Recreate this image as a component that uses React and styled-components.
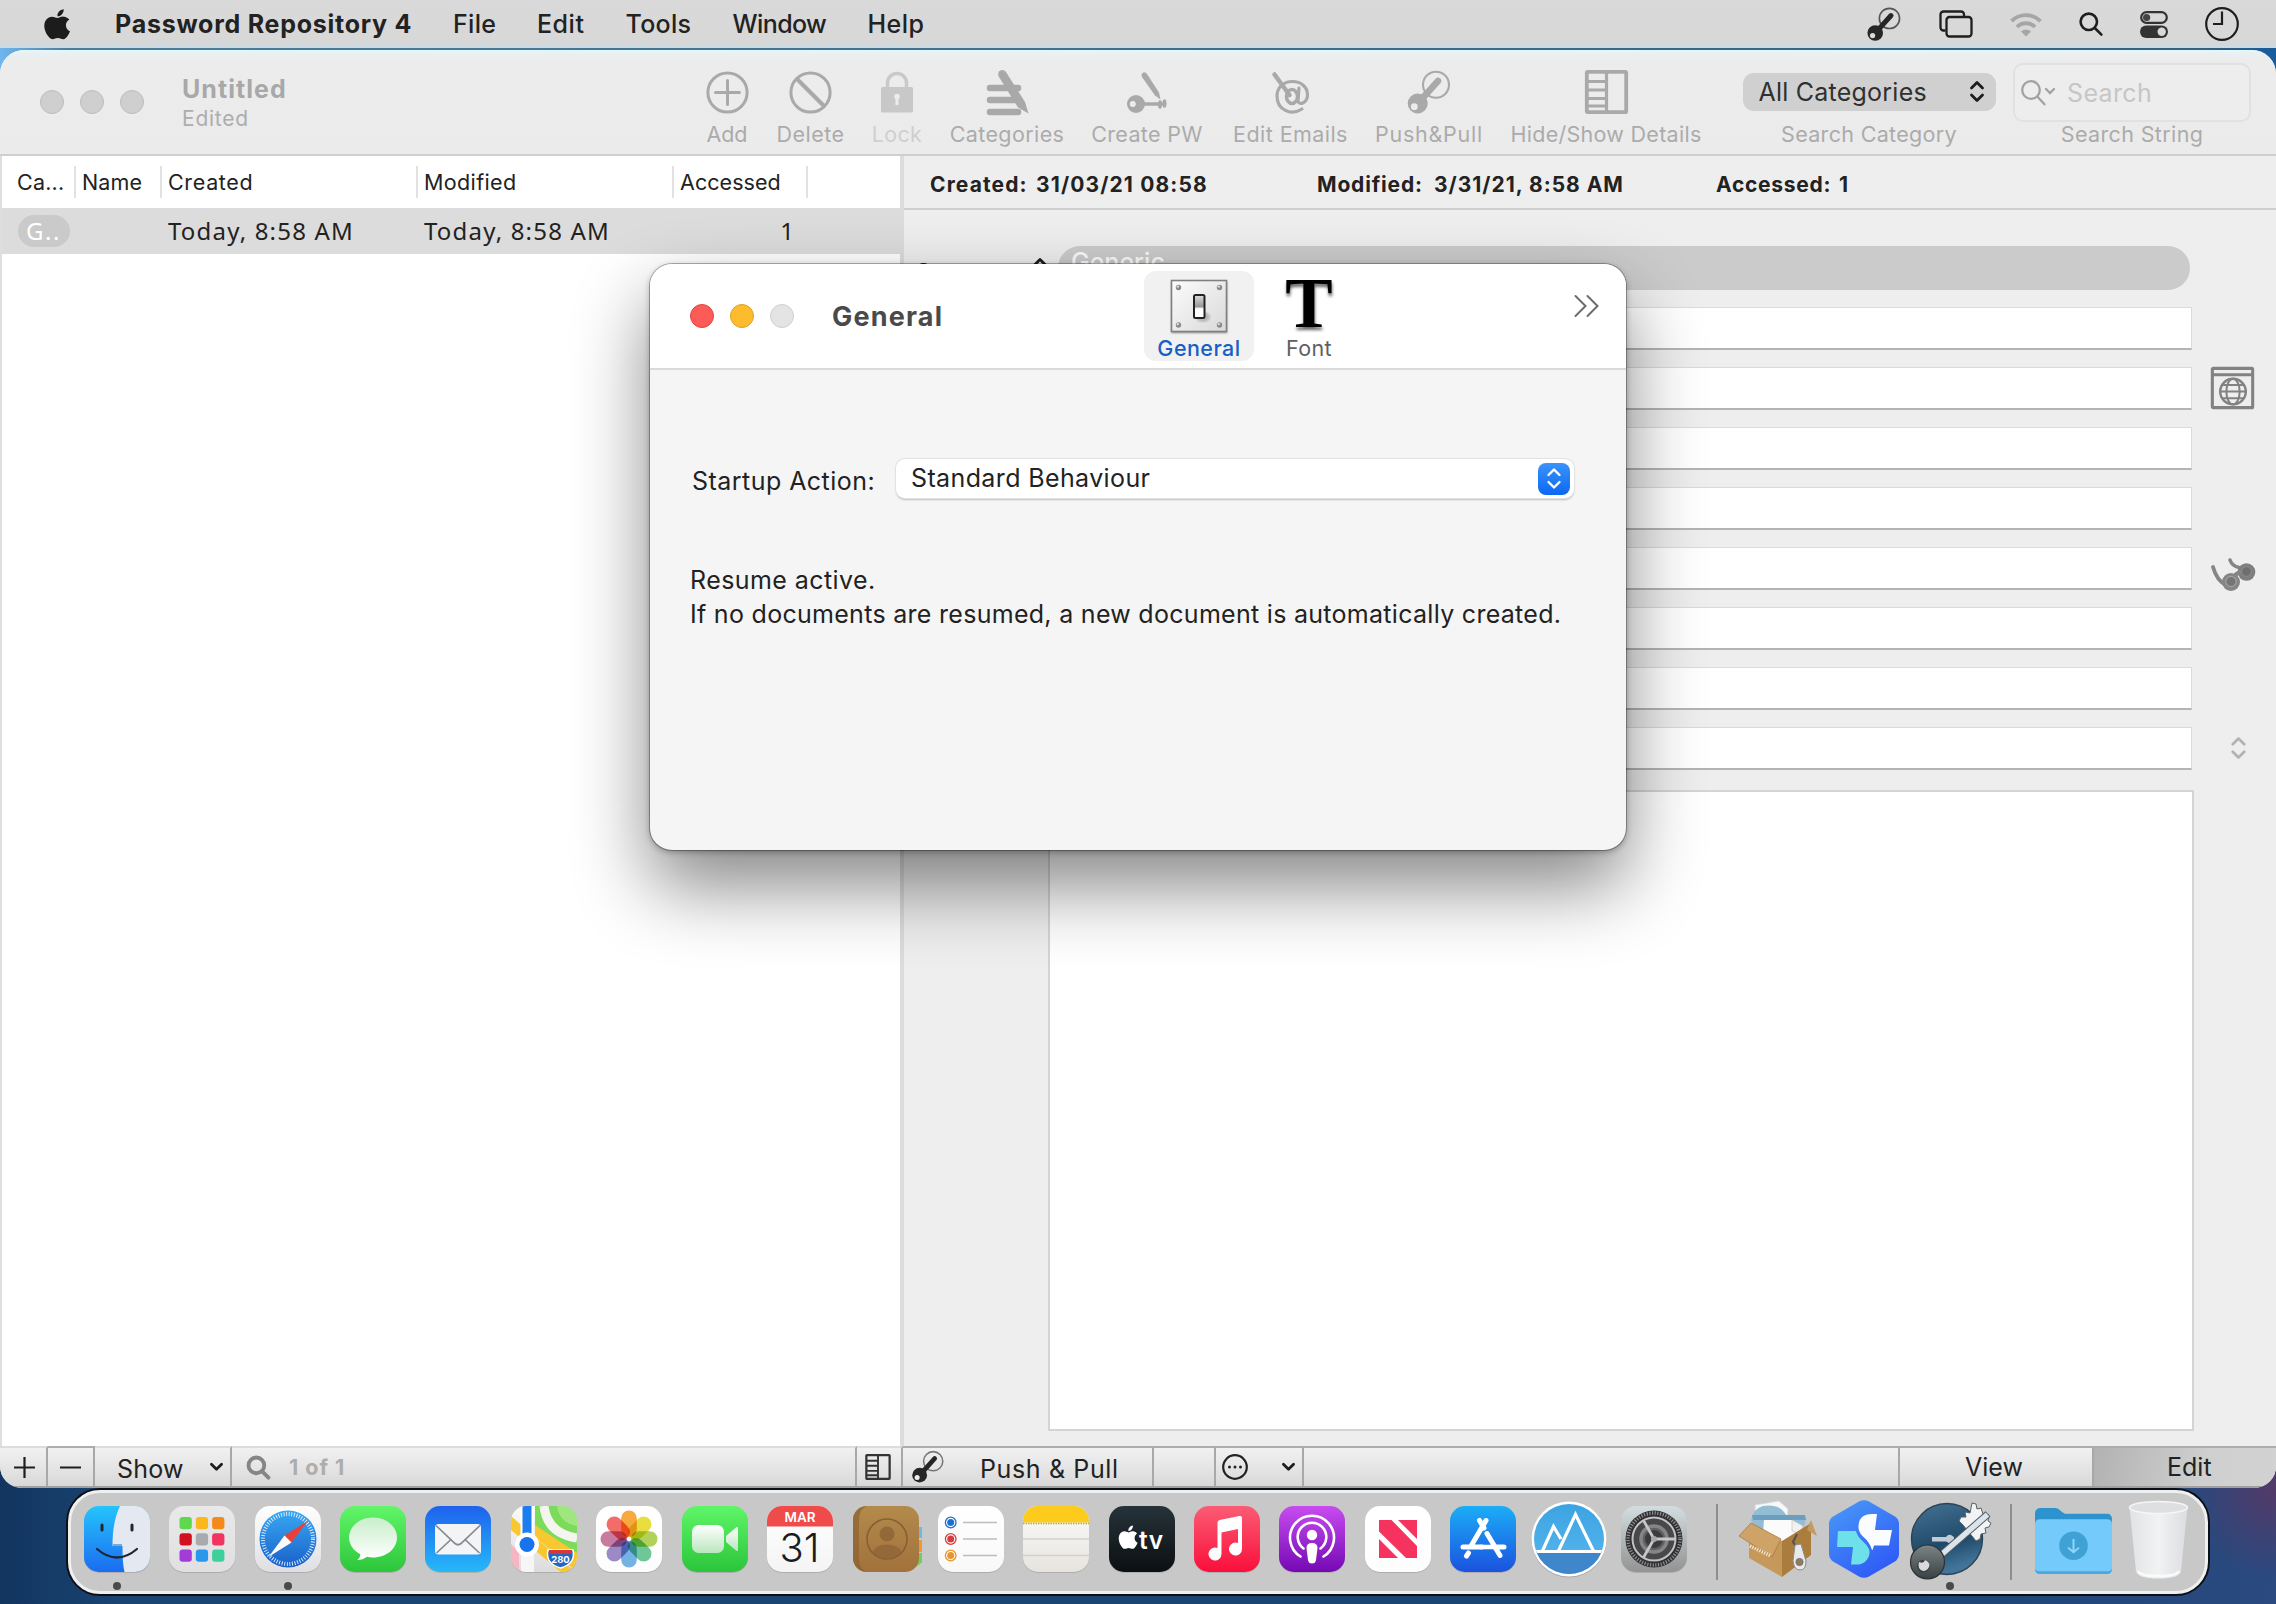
import React from "react";
import styled, { createGlobalStyle } from "styled-components";

const Global = createGlobalStyle`
  * { box-sizing: border-box; }
  body { margin: 0; overflow: hidden; }
  svg { display: block; flex: none; overflow: visible; }
`;

/* ---------- Primitives ---------- */

const Text = styled.span`
  font-family: ${(p) => p.$family || "Inter"}, "Liberation Sans", sans-serif;
  font-size: ${(p) => p.$size || 25}px;
  font-weight: ${(p) => p.$weight || 400};
  letter-spacing: ${(p) => p.$ls || 0}px;
  color: ${(p) => p.$color || "#222"};
  line-height: 30px;
  white-space: pre;
`;

const Desktop = styled.div`
  position: relative;
  width: 2276px;
  height: 1604px;
  overflow: hidden;
  display: flex;
  flex-direction: column;
  background:
    radial-gradient(circle at 2276px 1490px, #533a68 0, rgba(83, 58, 104, 0) 90px),
    linear-gradient(90deg, #12355f 0, rgba(24, 68, 112, 0) 120px) 0 1440px / 100% 164px no-repeat,
    linear-gradient(90deg, #1a4472 0, #1a4472 80%, #2a4a80 100%) 0 1440px / 100% 164px no-repeat,
    linear-gradient(90deg, #6fb6ee 0, #4a7d9c 3%, #33617f 97%, #175c9e 100%);
`;

/* ---------- Menu bar ---------- */

const MenuBar = styled.header`
  height: 48px;
  flex: none;
  display: grid;
  grid-template-columns: 71px 338px 84px 88.5px 107px 135px 1fr auto;
  align-items: center;
  padding: 0 37px 0 44px;
  background: linear-gradient(#d9d9d9 0, #d8d8d8 40px, #d9d6d4 43px, #cddae1 45px);
`;

const StatusItems = styled.div`
  display: flex;
  align-items: center;
  & > svg + svg { margin-left: 37px; }
`;

/* ---------- Main window ---------- */

const Window = styled.main`
  height: 1438px;
  margin-top: 2px;
  flex: none;
  display: flex;
  flex-direction: column;
  border-radius: 24px 24px 22px 22px;
  overflow: hidden;
  background: #ededed;
`;

const Toolbar = styled.div`
  height: 106px;
  flex: none;
  display: flex;
  align-items: flex-start;
  background: linear-gradient(#e4f7fd 0, #e9f1f3 3px, #ececec 9px, #ebebeb 100%);
  border-bottom: 2px solid #cfcfcf;
`;

const Lights = styled.div`
  display: flex;
  gap: 16px;
  padding: 40px 0 0 40px;
`;

const Light = styled.i`
  width: 24px;
  height: 24px;
  border-radius: 50%;
  background: ${(p) => p.$c};
  border: 1px solid ${(p) => p.$b};
`;

const TitleBlock = styled.div`
  width: 561px;
  padding: 24px 0 0 38px;
  display: flex;
  flex-direction: column;
`;

const Tools = styled.div`
  display: flex;
  gap: 25px;
`;

const Tool = styled.div`
  width: ${(p) => p.$w}px;
  margin-left: ${(p) => p.$ml || 0}px;
  height: 104px;
  display: flex;
  flex-direction: column;
  align-items: center;
  padding-top: 12px;
`;

const ToolArt = styled.div`
  height: 60px;
  flex: none;
  display: flex;
  align-items: center;
  align-self: stretch;
  justify-content: center;
  margin-bottom: -3px;
`;

const CategorySelect = styled.div`
  width: 253px;
  height: 38px;
  border-radius: 11px;
  background: #d0d0d0;
  display: flex;
  align-items: center;
  justify-content: space-between;
  padding: 0 12px 1px 16px;
`;

const SearchBox = styled.div`
  width: 238px;
  height: 59px;
  border-radius: 10px;
  border: 2px solid #e3e1e0;
  background: #ededed;
  display: flex;
  align-items: center;
  gap: 12px;
  padding: 2px 0 0 6px;
`;

const Panes = styled.div`
  flex: 1;
  min-height: 0;
  display: grid;
  grid-template-columns: 904px 1fr;
`;

const ListPane = styled.section`
  background: #fff;
  border-left: 2px solid #dedede;
  border-right: 4px solid #dcdcdc;
`;

const listColumns = "74px 86px 256px 256px 134px 1fr";

const ListHeader = styled.div`
  height: 52px;
  display: grid;
  grid-template-columns: ${listColumns};
  align-items: center;
`;

const HeadCell = styled.div`
  height: 32px;
  display: flex;
  align-items: center;
  padding-left: ${(p) => p.$pl || 5}px;
  border-right: 2px solid #e2e2e2;
`;

const ListRow = styled.div`
  height: 46px;
  display: grid;
  grid-template-columns: ${listColumns};
  align-items: center;
  background: #dcdcdc;
`;

const Cell = styled.div`
  padding-left: 6px;
  display: flex;
  justify-content: ${(p) => (p.$right ? "flex-end" : "flex-start")};
  padding-right: ${(p) => (p.$right ? 14 : 0)}px;
`;

const CategoryPill = styled.div`
  width: 52px;
  height: 32px;
  margin-left: 16px;
  border-radius: 16px;
  background: #cacaca;
  display: flex;
  align-items: center;
  padding-left: 8px;
`;

const DetailPane = styled.section`
  display: flex;
  flex-direction: column;
  background: #eeeeee;
`;

const InfoBar = styled.div`
  height: 54px;
  display: grid;
  grid-template-columns: 106px 281px 117px 282px 123px 1fr;
  align-items: center;
  padding: 5px 0 0 26px;
  border-bottom: 2px solid #cfcfcf;
`;

const Form = styled.div`
  padding: 36px 0 0 10px;
  display: flex;
  flex-direction: column;
`;

const FormRow = styled.div`
  display: grid;
  grid-template-columns: 135px 1143px 1fr;
  align-items: center;
  height: ${(p) => p.$h || 60}px;
`;

const GenericPill = styled.div`
  height: 44px;
  margin: 0 2px 0 9px;
  border-radius: 22px;
  background: #cbcbcb;
  display: flex;
  align-items: center;
  padding: 0 0 12px 13px;
`;

const LabelCell = styled.div`
  display: flex;
  align-items: center;
  justify-content: space-between;
  padding-right: 2px;
`;

const RowLabel = styled.div`
  padding-top: 9px;
`;

const Field = styled.div`
  height: 43px;
  background: #fff;
  border: 1px solid #dadada;
  border-bottom: 2px solid #b4b4b4;
`;

const RowIcon = styled.div`
  padding-left: ${(p) => p.$pl}px;
  padding-top: ${(p) => p.$pt || 0}px;
`;

const Notes = styled.div`
  width: 1146px;
  height: 641px;
  margin: 12px 0 0 134px;
  background: #fff;
  border: 2px solid #d4d4d4;
`;

const BottomBar = styled.footer`
  height: 42px;
  flex: none;
  display: flex;
  background: linear-gradient(#f2f2f2 0, #e6e6e6 50%, #d8d8d8 100%);
  border-bottom: 2px solid #a0a0a0;
`;

const Segment = styled.div`
  width: ${(p) => p.$w}px;
  flex: ${(p) => (p.$grow ? "1" : "none")};
  display: flex;
  align-items: center;
  padding-left: ${(p) => p.$pl || 0}px;
  gap: ${(p) => p.$gap || 0}px;
  background: ${(p) => p.$bg || "none"};
  border-right: ${(p) => (p.$last ? 0 : 2)}px solid #a8a8a8;
  border-top: 2px solid ${(p) => p.$top || "#adadad"};
`;

const Lowered = styled.div`
  display: flex;
  padding-top: 3px;
`;

/* ---------- Preferences window ---------- */

const Prefs = styled.section`
  position: absolute;
  left: 650px;
  top: 264px;
  width: 976px;
  height: 586px;
  border-radius: 22px;
  background: #f5f5f5;
  box-shadow: 0 0 0 1px rgba(0, 0, 0, 0.28), 0 2px 6px rgba(0, 0, 0, 0.3), 0 36px 76px rgba(0, 0, 0, 0.48);
  display: flex;
  flex-direction: column;
  overflow: clip;
`;

const PrefsBar = styled.div`
  height: 106px;
  flex: none;
  display: flex;
  background: #fff;
  border-bottom: 2px solid #dadada;
`;

const PrefsTitle = styled.div`
  width: 350px;
  padding: 38px 0 0 38px;
`;

const Tab = styled.div`
  width: 110px;
  height: 90px;
  margin-top: 7px;
  border-radius: 12px;
  background: ${(p) => (p.$active ? "#f1f1f1" : "none")};
  display: flex;
  flex-direction: column;
  align-items: center;
  padding-top: 8px;
`;

const TabArt = styled.div`
  height: 56px;
`;

const More = styled.div`
  margin: 31px 27px 0 auto;
`;

const PrefsBody = styled.div`
  display: flex;
  flex-direction: column;
  padding: 89px 52px 0 40px;
`;

const StartupRow = styled.div`
  display: grid;
  grid-template-columns: 204px 1fr;
  align-items: center;
  padding-left: 2px;
`;

const StartupLabel = styled.div`
  padding-top: 4px;
`;

const Popup = styled.div`
  height: 39px;
  border-radius: 9px;
  background: #fff;
  box-shadow: 0 0 0 1px #e2e2e2, 0 2px 2px rgba(0, 0, 0, 0.22);
  display: flex;
  align-items: center;
  justify-content: space-between;
  padding: 0 4px 0 15px;
`;

const PopupValue = styled.div`
  display: flex;
  padding-bottom: 2px;
`;

const Stepper = styled.div`
  width: 32px;
  height: 32px;
  border-radius: 8px;
  background: linear-gradient(#3c93fb, #0a68f2);
  display: flex;
  align-items: center;
  justify-content: center;
`;

const Explain = styled.p`
  margin: 67px 0 0;
  display: flex;
  flex-direction: column;
  gap: 4px;
`;

/* ---------- Dock ---------- */

const Dock = styled.nav`
  flex: none;
  width: 2140px;
  height: 104px;
  margin: 2px 0 0 68px;
  border-radius: 32px;
  border: 3px solid #eef0ef;
  box-shadow: 0 0 0 2px #0c1016;
  background: #c8c8c8;
  display: flex;
  z-index: 1;
  padding-left: 3px;
`;

const Slot = styled.div`
  width: ${(p) => p.$w || 85.5}px;
  height: 98px;
  display: flex;
  flex-direction: column;
  align-items: center;
  justify-content: flex-start;
  padding-top: ${(p) => p.$pt ?? 13}px;
`;

const RunDot = styled.i`
  width: 8px;
  height: 8px;
  border-radius: 50%;
  background: #4a4a4a;
  margin-top: ${(p) => p.$mt ?? 10}px;
`;

const Divider = styled.div`
  width: 2px;
  height: 76px;
  margin: 11px ${(p) => p.$mr}px 0 ${(p) => p.$ml}px;
  background: #8e8e8e;
`;

/* ---------- Symbols ---------- */

const AppleShape = ({ fill }) => (
  <>
    <path fill={fill} d="M21.6 16.2c0-3.2 2.6-4.7 2.7-4.8-1.5-2.200-3.800-2.500-4.600-2.500-2-.2-3.800 1.200-4.800 1.200-1 0-2.500-1.100-4.100-1.100-2.100 0-4.100 1.200-5.200 3.100-2.200 3.800-.6 9.500 1.600 12.600 1 1.500 2.300 3.200 3.900 3.100 1.600-.1 2.200-1 4.100-1s2.500 1 4.100 1c1.700 0 2.800-1.500 3.800-3.100 1.200-1.700 1.700-3.400 1.700-3.500-.1 0-3.200-1.300-3.200-5z" />
    <path fill={fill} d="M18.500 6.800c.9-1.100 1.500-2.500 1.300-4-1.200.1-2.700.8-3.600 1.900-.8.900-1.500 2.400-1.300 3.900 1.400.1 2.800-.7 3.600-1.800z" />
  </>
);

const Apple = () => (
  <svg width="26" height="31" viewBox="4.300 2.500 20.500 26" preserveAspectRatio="none"><AppleShape fill="#1c1c1c" /></svg>
);

const PushKey = ({ color, hole, w = 46, h = 45, ring = color }) => (
  <svg width={w} height={h} viewBox="0 0 46 45">
    <circle cx="30" cy="14.700" r="13" fill="none" stroke={ring} strokeWidth="2.100" />
    <path d="M14 31L32 11" stroke={color} strokeWidth="6.500" strokeLinecap="round" />
    <circle cx="11.700" cy="33.500" r="10" fill={color} />
    <circle cx="8.300" cy="36.700" r="3.400" fill={hole} />
  </svg>
);

const Windows = () => (
  <svg width="34" height="28" viewBox="0 0 34 28" fill="none" stroke="#1e1e1e" strokeWidth="2.300">
    <path d="M6.500 20.500H4.500a3 3 0 0 1-3-3V4.500a3 3 0 0 1 3-3H22a3 3 0 0 1 3 3v2" />
    <rect x="7.500" y="7" width="25" height="19.500" rx="3" />
  </svg>
);

const Wifi = () => (
  <svg width="32" height="25" viewBox="0 0 32 25" fill="none" stroke="#a6a6a6" strokeWidth="3.800">
    <path d="M1.500 9.200a20.500 20.500 0 0 1 29 0" />
    <path d="M7 15a12.700 12.700 0 0 1 18 0" />
    <path d="M16 24.500l-5-5a7 7 0 0 1 10 0z" fill="#a6a6a6" stroke="none" />
  </svg>
);

const Magnifier = ({ size = 24, color = "#1e1e1e", sw = 2.600 }) => (
  <svg width={size} height={size} viewBox="0 0 24 24" fill="none" stroke={color} strokeWidth={sw} strokeLinecap="round">
    <circle cx="9.800" cy="9.800" r="8.200" />
    <path d="M15.800 16l6.600 6.600" />
  </svg>
);

const ControlCenter = () => (
  <svg width="28" height="27" viewBox="0 0 28 27">
    <rect x="1.200" y="1.200" width="25.600" height="10.600" rx="5.300" fill="none" stroke="#333" strokeWidth="2.200" />
    <circle cx="6.600" cy="6.500" r="3.600" fill="#444" />
    <rect x="0" y="14.500" width="28" height="12.500" rx="6.200" fill="#333" />
    <circle cx="21.700" cy="20.700" r="4.200" fill="#d9d9d9" />
  </svg>
);

const Clock = () => (
  <svg width="34" height="34" viewBox="0 0 34 34" fill="none" stroke="#1e1e1e" strokeWidth="2.200">
    <circle cx="17" cy="17" r="15.800" />
    <path d="M17 4.500V17H8" />
  </svg>
);

const G = "#a9a9a9";

const AddIcon = () => (
  <svg width="43" height="43" viewBox="0 0 43 43" fill="none" stroke={G} strokeWidth="3">
    <circle cx="21.500" cy="21.500" r="19.600" />
    <path d="M21.500 9.500v24M9.500 21.500h24" strokeLinecap="round" />
  </svg>
);

const DeleteIcon = () => (
  <svg width="43" height="43" viewBox="0 0 43 43" fill="none" stroke={G} strokeWidth="3">
    <circle cx="21.500" cy="21.500" r="19.600" />
    <path d="M8 8l27 27" strokeWidth="4" />
  </svg>
);

const LockIcon = () => (
  <svg width="32" height="41" viewBox="0 0 32 41">
    <path d="M6.500 16V11a9.500 9.500 0 0 1 19 0v5" fill="none" stroke="#c9c9c9" strokeWidth="3.500" />
    <rect y="15" width="32" height="25.500" rx="1.500" fill="#c8c8c8" />
    <circle cx="16" cy="24.500" r="2.800" fill="#ececec" />
    <path d="M16 25v8" stroke="#ececec" strokeWidth="3" />
  </svg>
);

const CategoriesIcon = () => (
  <svg width="43" height="45" viewBox="0 0 43 45" stroke={G} strokeWidth="6.500" strokeLinecap="round">
    <path d="M4 18h28M4 30h28M4 42h28" />
    <path d="M13 1.500q4-3 7 0.500L39 32l3.500 11.500L32 37.500 13 7q-1.500-3 0-5.500z" fill={G} stroke="none" />
  </svg>
);

const CreateIcon = () => (
  <svg width="40" height="43" viewBox="0 0 40 43">
    <circle cx="9" cy="33" r="9" fill={G} />
    <circle cx="5.800" cy="33" r="3" fill="#ececec" />
    <path d="M16 33h22M33 31v5M37.500 30v5" stroke={G} strokeWidth="3.600" strokeLinecap="round" />
    <path d="M15 2.500q3-2.500 5 .5l12 18.500 1.500 7-5.500-4L15 6q-1-2 0-3.500z" fill={G} />
  </svg>
);

const EmailIcon = () => (
  <svg width="38" height="43" viewBox="0 0 38 43" fill="none" stroke={G} strokeWidth="3.200" strokeLinecap="round">
    <path d="M2.500 3.500l15 20.500" strokeWidth="4.500" />
    <path d="M30 38c-11 7-25 1-25-13C5 16 12 10.500 20.500 10.500 29 10.500 35.500 16 35.500 23.500c0 9-9.500 11.500-9.500 6L27 17" />
    <ellipse cx="20" cy="25.500" rx="5.500" ry="7" strokeWidth="3.500" />
  </svg>
);

const SidebarIcon = ({ w, h, color }) => (
  <svg width={w} height={h} viewBox="0 0 43 44" fill="none" stroke={color} strokeWidth="3.800">
    <rect x="1.800" y="1.800" width="39.400" height="40.400" rx="1" />
    <path d="M21.500 2v40M3 11.500h18M3 20h18M3 28.500h18M3 36h18" strokeWidth="3.200" />
  </svg>
);

const UpDown = ({ w = 14, h = 21, color = "#1c1c1c", sw = 2.800 }) => (
  <svg width={w} height={h} viewBox="0 0 14 21" fill="none" stroke={color} strokeWidth={sw} strokeLinecap="round" strokeLinejoin="round">
    <path d="M1.500 7L7 1.500 12.500 7M1.500 14L7 19.500 12.500 14" />
  </svg>
);

const Chevron = ({ w = 13, color = "#1c1c1c", sw = 2.800 }) => (
  <svg width={w} height={w * 0.6} viewBox="0 0 13 8" fill="none" stroke={color} strokeWidth={sw} strokeLinecap="round" strokeLinejoin="round">
    <path d="M1.300 1.300L6.500 6.500 11.700 1.300" />
  </svg>
);

const SearchMenu = () => (
  <svg width="34" height="26" viewBox="0 0 34 26" fill="none" stroke="#a2a2a2" strokeWidth="2.300" strokeLinecap="round">
    <circle cx="10" cy="10" r="8.800" />
    <path d="M16.500 16.800l7 7.500M25 9l4 4 4-4" />
  </svg>
);

const WebIcon = () => (
  <svg width="43" height="42" viewBox="0 0 42 41" fill="none" stroke="#828282" strokeWidth="3">
    <rect x="1.300" y="1.300" width="39.400" height="38.400" rx="1" />
    <path d="M1 7.500h40" />
    <g strokeWidth="2.400">
      <circle cx="21.500" cy="24" r="12.500" />
      <ellipse cx="21.500" cy="24" rx="6.500" ry="12.500" strokeWidth="2" />
      <path d="M9 24h25M11.500 17.500h20M11.500 30.500h20" strokeWidth="1.900" />
    </g>
  </svg>
);

const GlassesIcon = () => (
  <svg width="44" height="33" viewBox="0 0 44 33">
    <path d="M2 9q4 14 13 18" fill="none" stroke="#858585" strokeWidth="3.800" strokeLinecap="round" />
    <path d="M19 2q2 6 9 7.500" fill="none" stroke="#858585" strokeWidth="3.500" strokeLinecap="round" />
    <circle cx="35.500" cy="14" r="8.800" fill="#7e7e7e" />
    <path d="M24 17l6-4" stroke="#858585" strokeWidth="4" />
    <circle cx="20" cy="24" r="9" fill="#858585" />
    <circle cx="20" cy="23.500" r="5.200" fill="#757575" stroke="#a2a2a2" strokeWidth="1.200" />
    <circle cx="35.500" cy="13.500" r="4.800" fill="#6e6e6e" stroke="#8c8c8c" />
  </svg>
);

const PlusMinus = ({ plus }) => (
  <svg width="21" height="21" viewBox="0 0 21 21" stroke="#1e1e1e" strokeWidth="2.200">
    <path d={plus ? "M0 10.500h21M10.500 0v21" : "M0 10.500h21"} />
  </svg>
);

const Ellipsis = () => (
  <svg width="26" height="26" viewBox="0 0 26 26">
    <circle cx="13" cy="13" r="11.800" fill="none" stroke="#222" strokeWidth="2.200" />
    {[7.500, 13, 18.500].map((x) => <circle key={x} cx={x} cy="13" r="1.500" fill="#222" />)}
  </svg>
);

const SwitchPlate = () => (
  <svg width="58" height="54" viewBox="0 0 58 54">
    <defs>
      <linearGradient id="plate" x1="0" y1="0" x2="1" y2="1"><stop offset="0" stopColor="#fcfcfc" /><stop offset="1" stopColor="#d9d9d9" /></linearGradient>
      <linearGradient id="toggle" x1="0" y1="0" x2="0" y2="1"><stop offset="0" stopColor="#ddd" /><stop offset=".5" stopColor="#999" /><stop offset=".6" stopColor="#fff" /><stop offset="1" stopColor="#fff" /></linearGradient>
      <filter id="soft"><feGaussianBlur stdDeviation="1.300" /></filter>
    </defs>
    <rect x="1.500" y="3" width="55.500" height="51" fill="#888" filter="url(#soft)" />
    <rect x="1.500" y="1.500" width="55" height="51" fill="url(#plate)" stroke="#808080" strokeWidth="1.600" />
    {[[8.500, 8.500], [49.500, 8.500], [8.500, 46], [49.500, 46]].map(([x, y]) => (
      <g key={`${x}-${y}`}>
        <circle cx={x} cy={y} r="2.700" fill="#8b8b8b" />
        <circle cx={x - 0.700} cy={y - 0.900} r="1.200" fill="#ddd" />
      </g>
    ))}
    <ellipse cx="33" cy="38" rx="7" ry="5" fill="#999" opacity=".6" filter="url(#soft)" />
    <rect x="24" y="16" width="10.500" height="23" rx="1.500" fill="url(#toggle)" stroke="#222" strokeWidth="2" />
  </svg>
);

const LetterT = () => (
  <svg width="58" height="54" viewBox="0 0 58 54">
    <defs><filter id="drop" x="-20%" y="-20%" width="140%" height="150%"><feDropShadow dx="0.500" dy="3" stdDeviation="1.700" floodColor="#000" floodOpacity=".6" /></filter></defs>
    <text x="29" y="48" textAnchor="middle" fontFamily="Liberation Serif, serif" fontWeight="700" fontSize="71" fill="#050505" filter="url(#drop)">T</text>
  </svg>
);

const DoubleChevron = () => (
  <svg width="25" height="22" viewBox="0 0 25 22" fill="none" stroke="#6c6c6c" strokeWidth="2" strokeLinecap="round">
    <path d="M1.500 1l10 10-10 10M13.500 1l10 10-10 10" />
  </svg>
);

/* ---------- Dock icons ---------- */

const Tile = ({ id, from, to, children }) => (
  <svg width="66" height="66" viewBox="0 0 66 66">
    <defs>
      <linearGradient id={`g-${id}`} x1="0" y1="0" x2="0" y2="1"><stop offset="0" stopColor={from} /><stop offset="1" stopColor={to} /></linearGradient>
      <clipPath id={`c-${id}`}><rect width="66" height="66" rx="15" /></clipPath>
    </defs>
    <rect y="1" width="66" height="66" rx="15" fill="#000" opacity=".13" />
    <g clipPath={`url(#c-${id})`}>
      <rect width="66" height="66" fill={`url(#g-${id})`} />
      {children}
    </g>
  </svg>
);

const Finder = () => (
  <Tile id="finder" from="#25c4fb" to="#1b6cf1">
    <path d="M36 0h30v66H40.500c-1.500-7-2-15-2-26H28.500c0-16 2-28 7.500-40z" fill="#e4e8f1" />
    <path d="M29 39h9" stroke="#1a66b8" strokeWidth="1.200" />
    <path d="M18 19v5M48 19v5" stroke="#1b2733" strokeWidth="3" strokeLinecap="round" />
    <path d="M13 43q20 17 40 0" fill="none" stroke="#1b2733" strokeWidth="2.200" strokeLinecap="round" />
  </Tile>
);

const padColors = ["#5fd84f", "#fbb81c", "#f58a1c", "#d3101f", "#a7abb0", "#f2345e", "#a33bd6", "#2798ee", "#3fcf9b"];
const Launchpad = () => (
  <Tile id="pad" from="#e9e9ea" to="#e0e0e2">
    {padColors.map((c, i) => (
      <rect key={c} x={10.500 + (i % 3) * 16.300} y={11 + Math.floor(i / 3) * 16.200} width="12.300" height="12.300" rx="3" fill={c} />
    ))}
  </Tile>
);

const Safari = () => (
  <Tile id="safari" from="#ffffff" to="#dfdfe3">
    <defs><linearGradient id="sea" x1="0" y1="0" x2="0" y2="1"><stop offset="0" stopColor="#38a9f2" /><stop offset="1" stopColor="#1a5fc9" /></linearGradient></defs>
    <circle cx="33" cy="33" r="28.500" fill="url(#sea)" />
    <circle cx="33" cy="33" r="25" fill="none" stroke="#e5f2ff" strokeWidth="4" strokeDasharray=".9 1.718" />
    <path d="M52.500 15L36.500 36.500 29.500 29.500z" fill="#e8413b" />
    <path d="M13.500 51L29.500 29.500 36.500 36.500z" fill="#fafafa" />
  </Tile>
);

const Messages = () => (
  <Tile id="msg" from="#62f569" to="#2cc63b">
    <defs><linearGradient id="bub" x1="0" y1="0" x2="0" y2="1"><stop offset="0" stopColor="#c9eecb" /><stop offset="1" stopColor="#fff" /></linearGradient></defs>
    <path d="M33 11.500c13.500 0 24 9 24 20s-10.500 20-24 20c-2 0-4.200-.2-6-.7-2.500 2-6 3.200-10 3.400 2-1.500 3.200-3.500 3.300-6C13.500 44.500 9 38.500 9 31.500c0-11 10.500-20 24-20z" fill="url(#bub)" />
  </Tile>
);

const Mail = () => (
  <Tile id="mail" from="#1f62ee" to="#25b9f9">
    <rect x="10" y="18" width="46" height="30.500" rx="3.500" fill="#f3f4f6" />
    <path d="M11 19.500l19 18q3 2.500 6 0l19-18M11.500 47l15-14M54.500 47l-15-14" fill="none" stroke="#85898f" strokeWidth="1.700" />
  </Tile>
);

const Maps = () => (
  <Tile id="maps" from="#fafafa" to="#dcdcdc">
    <path d="M24 0h42v52L24 24z" fill="#7ddb5b" />
    <path d="M0 10l66 58H52L0 24z" fill="#f9c72f" />
    <path d="M66 47L24 19v12l42 35z" fill="#f9c72f" />
    <path d="M0 38l8 8v20H0z" fill="#f5b5c2" />
    <path d="M66 32C46 29 35 18 33 0" fill="none" stroke="#f5f5f0" strokeWidth="9" />
    <path d="M66 20C54 18 47 10 46 0h20z" fill="#a0e67f" />
    <path d="M10 40h13v26H10z" fill="#f6f6f6" />
    <rect x="9.500" y="-2" width="13" height="42" fill="#fff" />
    <rect x="11.500" y="-2" width="9" height="38" fill="#1c7df0" />
    <circle cx="16" cy="38.500" r="12" fill="#fff" />
    <circle cx="16" cy="38.500" r="7.500" fill="#1774ee" />
    <path d="M37 44h25c2 9-2 15-12.500 18C39 59 35 53 37 44z" fill="#2368c4" stroke="#fff" strokeWidth="1.500" />
    <path d="M38 44h23v4H37.500z" fill="#d9363c" />
    <text x="49.500" y="57" textAnchor="middle" fontFamily="Inter, sans-serif" fontWeight="700" fontSize="9.500" fill="#fff">280</text>
  </Tile>
);

const petals = ["#f79a1c", "#e6d91d", "#a3cc3a", "#55bd86", "#5ca7e0", "#8c77c0", "#c0648f", "#f1524d"];
const Petal = styled.rect`
  mix-blend-mode: multiply;
`;
const Photos = () => (
  <Tile id="photos" from="#ffffff" to="#fdfdfd">
    {petals.map((c, i) => (
      <Petal key={c} x="25.200" y="4.500" width="15.600" height="26.500" rx="7.800" fill={c} opacity=".85" transform={`rotate(${i * 45} 33 33)`} />
    ))}
  </Tile>
);

const FaceTime = () => (
  <Tile id="ft" from="#5ff568" to="#2bc53b">
    <defs><linearGradient id="cam" x1="0" y1="0" x2="0" y2="1"><stop offset="0" stopColor="#fff" /><stop offset="1" stopColor="#b9e6bd" /></linearGradient></defs>
    <rect x="10" y="19" width="32" height="28" rx="6.500" fill="url(#cam)" />
    <path d="M44 30l10-8.500q2-1.500 2 1v21q0 2.500-2 1L44 36z" fill="url(#cam)" />
  </Tile>
);

const Calendar = () => (
  <Tile id="cal" from="#ffffff" to="#f4f4f4">
    <rect width="66" height="20.500" fill="#f04b4b" />
    <text x="33" y="15.700" textAnchor="middle" fontFamily="Inter, sans-serif" fontWeight="600" fontSize="13.500" fill="#fff">MAR</text>
    <text x="32.500" y="55.500" textAnchor="middle" fontFamily="Inter, sans-serif" fontWeight="300" fontSize="40" fill="#1c1c1c">31</text>
  </Tile>
);

const Contacts = () => (
  <svg width="66" height="66" viewBox="-2 0 66 66">
    <path d="M60 21h8v11h-8z" fill="#6cb8e6" /><path d="M60 34h8v12h-8z" fill="#ee9a32" /><path d="M60 47h8v9q-3 4-8 5z" fill="#6fcf5a" />
    <defs><linearGradient id="lea" x1="0" y1="0" x2="0" y2="1"><stop offset="0" stopColor="#b38a4c" /><stop offset="1" stopColor="#a2713c" /></linearGradient></defs>
    <rect x="-1" width="66" height="66" rx="14" fill="url(#lea)" />
    <path d="M13 0A14 14 0 0 0-1 14v38a14 14 0 0 0 14 14q-8-3-8-14V14Q5 3 13 0z" fill="#8b6232" opacity=".7" />
    <circle cx="33" cy="33" r="20" fill="none" stroke="#875f31" strokeWidth="1.600" />
    <circle cx="33" cy="28" r="7.500" fill="#93693a" />
    <path d="M18.500 46q3.500-7.500 14.500-7.500T47.500 46q-6 6.700-14.500 6.700T18.500 46z" fill="#93693a" />
  </svg>
);

const Reminders = () => (
  <Tile id="rem" from="#ffffff" to="#f8f8f8">
    {[["#1a6fd0", 16.500], ["#d63b3e", 33], ["#e6962a", 49.500]].map(([c, y]) => (
      <g key={c}>
        <circle cx="12.700" cy={y} r="5.300" fill="none" stroke={c} strokeWidth="1.300" />
        <circle cx="12.700" cy={y} r="3.500" fill={c} />
        <path d={`M25 ${y}h34`} stroke="#bdbdbd" strokeWidth="1.600" />
      </g>
    ))}
  </Tile>
);

const NotesApp = () => (
  <Tile id="notes" from="#fbfbfa" to="#e7e4df">
    <rect width="66" height="16.500" fill="#fccb1b" />
    <path d="M0 17.500h66" stroke="#b9a35c" strokeWidth="1.500" strokeDasharray="1.500 1" />
    <path d="M0 33h66M0 49.500h66" stroke="#d3d1cd" strokeWidth="1.400" />
  </Tile>
);

const TV = () => (
  <Tile id="tv" from="#26333a" to="#0b0f11">
    <g transform="translate(5.500 17) scale(.93)"><AppleShape fill="#fff" /></g>
    <text x="30" y="43" fontFamily="Inter, sans-serif" fontWeight="600" fontSize="24.500" letterSpacing=".5" fill="#fff">tv</text>
  </Tile>
);

const Music = () => (
  <Tile id="music" from="#fb5c74" to="#fa0f3b">
    <path d="M23.500 16.500q0-2 2-2.500l20-4q2.500-.4 2.500 2V43a6.500 6.500 0 1 1-4-6V23l-16.500 3.400V48a6.500 6.500 0 1 1-4-6z" fill="#fff" />
  </Tile>
);

const Podcasts = () => (
  <Tile id="pod" from="#c84cf0" to="#7409b4">
    <g fill="none" stroke="#fff" strokeWidth="2.600" strokeLinecap="round">
      <path d="M21.500 50.500a22 22 0 1 1 23 0" />
      <path d="M24.500 42.500a14.300 14.300 0 1 1 17 0" />
    </g>
    <circle cx="33" cy="29" r="5.200" fill="#fff" />
    <path d="M27.500 42q0-5 5.500-5t5.500 5l-1.500 12q-.5 3.500-4 3.500t-4-3.500z" fill="#fff" />
  </Tile>
);

const News = () => (
  <Tile id="news" from="#ffffff" to="#fdfdfd">
    <path d="M14 14h12.500L52 40v12H41L14 25.500z" fill="#f5335e" />
    <path d="M33 14h19v19z" fill="#f5335e" />
    <path d="M14 33v19h19z" fill="#f5335e" />
  </Tile>
);

const AppStore = () => (
  <Tile id="store" from="#1cadf7" to="#1b52df">
    <g stroke="#fff" strokeWidth="5" strokeLinecap="round">
      <path d="M36 14.500L21 40M29.500 14.500L34 22M37 27.500L50 49.500M13 41h19M44 41h10M18.500 47l-2 3" />
      <path d="M30 41h14" strokeWidth="4.500" />
    </g>
  </Tile>
);

const Mountains = () => (
  <svg width="76" height="76" viewBox="0 0 76 76">
    <defs>
      <linearGradient id="sky" x1="0" y1="0" x2="0" y2="1"><stop offset="0" stopColor="#3aa3e2" /><stop offset="1" stopColor="#5cb8ee" /></linearGradient>
      <clipPath id="disc"><circle cx="38" cy="38" r="35" /></clipPath>
    </defs>
    <circle cx="38" cy="39" r="37.500" fill="#000" opacity=".16" />
    <circle cx="38" cy="38" r="37.500" fill="#fff" />
    <g clipPath="url(#disc)">
      <rect width="76" height="76" fill="url(#sky)" />
      <rect y="50" width="76" height="26" fill="#3f86cb" />
      <path d="M0 50.500h76" stroke="#fff" strokeWidth="3.200" />
      <path d="M11 51L22.500 25.500 30 38M27 51L44.500 13.500 63 51" fill="none" stroke="#fff" strokeWidth="3.200" />
    </g>
  </svg>
);

const Settings = () => (
  <Tile id="set" from="#d3dde0" to="#939393">
    <circle cx="33" cy="33" r="28.500" fill="#2f2f31" />
    <circle cx="33" cy="33" r="26" fill="none" stroke="#8f8f91" strokeWidth="3.500" strokeDasharray="1.200 1.520" />
    <circle cx="33" cy="33" r="21.500" fill="#48484a" stroke="#c2c2c4" strokeWidth="2" />
    <circle cx="33" cy="33" r="13" fill="#606063" stroke="#858588" strokeWidth="3.500" />
    <circle cx="33" cy="33" r="9" fill="#3b3b3d" />
    <path d="M33 33h21M33 33L22.500 14.500M33 33L22.500 51.500" stroke="#c6c6c8" strokeWidth="2.800" />
    <circle cx="33" cy="33" r="3" fill="#a8a8aa" />
  </Tile>
);

const Archive = () => (
  <svg width="82" height="78" viewBox="0 0 82 78">
    <path d="M17 5l24-4 9 8-2 28H19z" fill="#f6f8fa" stroke="#d5d8da" strokeWidth=".8" />
    <path d="M13 20q3-12 12-14 15-2 21 6l3 4h18q2 10-6 17L20 36z" fill="#94bcd4" />
    <path d="M14 15h53l1 5H15z" fill="#6b9fc0" />
    <path d="M26 20h28l9 6-4 22H24z" fill="#fbfbfb" />
    <path d="M54 20l11 6-3 8-8-3z" fill="#f1f1f1" stroke="#ccc" strokeWidth=".8" />
    <path d="M11 27l33 14v36L11 58z" fill="#c6995b" />
    <path d="M44 41l29-18v32L44 77z" fill="#ab7d3d" />
    <path d="M73 20l6 16-10-6z" fill="#c39a61" />
    <path d="M13 23l30 16-9 18L1 36z" fill="#cfa368" stroke="#a67b41" strokeWidth=".8" />
    <path d="M12 46l21 10" stroke="#f3ead9" strokeWidth="3.500" strokeDasharray="1.300 1.300" />
    <path d="M59 34l-4 8 4 6" fill="none" stroke="#55504a" strokeWidth="2" />
    <path d="M57 45l6-1 5 17q0 9-6 9t-7-9z" fill="#e9e9e9" stroke="#8c8c8c" strokeWidth="1" />
    <circle cx="61.500" cy="62" r="3.600" fill="#8f7a5a" stroke="#777" />
  </svg>
);

const HexCross = () => (
  <svg width="70" height="78" viewBox="0 0 70 78">
    <defs><linearGradient id="hex" x1="0" y1="0" x2=".6" y2="1"><stop offset="0" stopColor="#4a9bf8" /><stop offset="1" stopColor="#2f5cf6" /></linearGradient></defs>
    <path d="M30 1.500q5-2.700 10 0l25.500 14.700Q70 19 70 24v30q0 5-4.500 7.800L40 76.500q-5 2.700-10 0L4.500 61.800Q0 59 0 54V24q0-5 4.500-7.800z" fill="url(#hex)" />
    <path d="M48 14h-5Q29 14 29.500 28q.5 5 5 9 6 5 8.500 13h.5l1.500-4.500h15l3-15.500H46z" fill="#fafcff" />
    <path d="M9 31h18q1 5 6 9.500Q43 49 40 56q-3 7.500-10 8.500h-8l2-17.500H8z" fill="#6ee0ea" />
  </svg>
);

const Repository = () => (
  <svg width="80" height="80" viewBox="0 0 80 80">
    <defs>
      <linearGradient id="disk" x1="0" y1="0" x2=".3" y2="1"><stop offset="0" stopColor="#467296" /><stop offset=".65" stopColor="#1f4a68" /><stop offset="1" stopColor="#42749a" /></linearGradient>
      <linearGradient id="knob" x1="0" y1="0" x2="0" y2="1"><stop offset="0" stopColor="#7c8486" /><stop offset="1" stopColor="#3a4043" /></linearGradient>
    </defs>
    <circle cx="37" cy="39" r="35.500" fill="url(#disk)" stroke="#2b4354" strokeWidth="1.400" />
    <path d="M22 37h14q2-3 5-2l3 2v4l-5 2-3-1.500H22z" fill="#c2cbd3" />
    <path d="M62 3l4 1 1 5 4-1 2 6 6 1-1 6 3 2-2 4-4 1 1 5-5 1-1 5-4 2-13-16-4-4 2-4 5 0-1-5 5 1z" fill="#f1f3f4" stroke="#5a6166" strokeWidth="1" />
    <path d="M31 55L78 14" stroke="#4f5b64" strokeWidth="7.500" />
    <path d="M31 55L77.500 14.500" stroke="#dde3ea" strokeWidth="5.500" />
    <circle cx="17.500" cy="62" r="17" fill="url(#knob)" stroke="#2b3134" strokeWidth="1.200" />
    <circle cx="13.500" cy="66" r="6.300" fill="#3b4144" />
    <path d="M9 62q5 2 6-2 6 3 4 7-2 4-6 4-6-2-4-9z" fill="#dadada" />
  </svg>
);

const Downloads = () => (
  <svg width="77" height="66" viewBox="0 0 77 70" preserveAspectRatio="none">
    <path d="M0 6q0-6 6-6h14q3 0 5 2.500t5 3.500h42q5 0 5 6v20H0z" fill="#2d93ce" />
    <path d="M0 17q0-5 5-5h67q5 0 5 5v48q0 5-5 5H5q-5 0-5-5z" fill="#74cbfb" />
    <path d="M0 65q0 5 5 5h67q5 0 5-5v-1q0 3-5 3H5q-5 0-5-3z" fill="#4ba8dd" />
    <ellipse cx="38.500" cy="40" rx="14.300" ry="15.200" fill="#3fa1d4" />
    <path d="M38.500 33v14M33 42l5.500 5 5.500-5" fill="none" stroke="#8fd6fc" strokeWidth="2" />
  </svg>
);

const Trash = () => (
  <svg width="59" height="78" viewBox="0 0 59 78">
    <defs><linearGradient id="bin" x1="0" y1="0" x2="1" y2="0"><stop offset="0" stopColor="#e2e3e5" /><stop offset=".5" stopColor="#f1f2f3" /><stop offset="1" stopColor="#dcdde0" /></linearGradient></defs>
    <path d="M.5 6l6.500 64q1 7.500 22.500 7.500T52 70L58.500 6z" fill="url(#bin)" />
    <ellipse cx="29.500" cy="6.500" rx="29" ry="6" fill="#dedfe1" stroke="#f6f6f6" strokeWidth="1.600" />
    <path d="M9 70q2 5 20.500 5T50 70" fill="none" stroke="#fbfbfb" strokeWidth="2.500" />
  </svg>
);

/* ---------- Page ---------- */

const menus = [["File", 0.32], ["Edit", 0.52], ["Tools", 0.28], ["Window", -0.59], ["Help", 0.47]];

const tools = [
  { label: "Add", w: 44, ls: -0.1, icon: <AddIcon /> },
  { label: "Delete", w: 73, ls: 0.45, icon: <DeleteIcon /> },
  { label: "Lock", w: 50, ls: 0.3, icon: <LockIcon />, dim: true },
  { label: "Categories", w: 120, ls: 0.4, icon: <CategoriesIcon /> },
  { label: "Create PW", w: 110, ls: 0.33, icon: <CreateIcon /> },
  { label: "Edit Emails", w: 127, ls: 0.44, icon: <EmailIcon /> },
  { label: "Push&Pull", w: 100, ls: 0.75, icon: <PushKey color={G} hole="#ececec" /> },
  { label: "Hide/Show Details", w: 204, ls: 0.28, icon: <SidebarIcon w={43} h={44} color={G} /> },
];

const dockApps = [Finder, Launchpad, Safari, Messages, Mail, Maps, Photos, FaceTime, Calendar, Contacts, Reminders, NotesApp, TV, Music, Podcasts, News, AppStore, Mountains, Settings];
const running = [Finder, Safari];

const fieldIcons = {
  1: <RowIcon $pl={19}><WebIcon /></RowIcon>,
  4: <RowIcon $pl={19} $pt={12}><GlassesIcon /></RowIcon>,
  7: <RowIcon $pl={39}><UpDown w={15} h={22} color="#b2b2b2" sw={2.600} /></RowIcon>,
};

const ToolLabel = (p) => <Text $size={21.5} $color="#ababab" {...p} />;

export default function App() {
  return (
    <Desktop>
      <Global />
      <MenuBar>
        <Apple />
        <Text $weight={700} $ls={0.75}>Password Repository 4</Text>
        {menus.map(([name, ls]) => <Text key={name} $weight={500} $ls={ls}>{name}</Text>)}
        <StatusItems>
          <PushKey color="#262626" ring="#555" hole="#d9d9d9" w={36} h={35} />
          <Windows />
          <Wifi />
          <Magnifier />
          <ControlCenter />
          <Clock />
        </StatusItems>
      </MenuBar>

      <Window>
        <Toolbar>
          <Lights>
            {[0, 1, 2].map((i) => <Light key={i} $c="#cfcfcf" $b="#bcbcbc" />)}
          </Lights>
          <TitleBlock>
            <Text $weight={700} $ls={1.05} $color="#a8a8a8">Untitled</Text>
            <Text $size={21} $ls={0.76} $color="#adadad">Edited</Text>
          </TitleBlock>
          <Tools>
            {tools.map((t) => (
              <Tool key={t.label} $w={t.w}>
                <ToolArt>{t.icon}</ToolArt>
                <ToolLabel $ls={t.ls} $color={t.dim ? "#cfcfcf" : "#ababab"}>{t.label}</ToolLabel>
              </Tool>
            ))}
            <Tool $w={253} $ml={9.5}>
              <ToolArt>
                <CategorySelect>
                  <Text $ls={0.23} $color="#303030">All Categories</Text>
                  <UpDown />
                </CategorySelect>
              </ToolArt>
              <ToolLabel $ls={0.32}>Search Category</ToolLabel>
            </Tool>
            <Tool $w={238} $ml={-7.5}>
              <ToolArt>
                <SearchBox>
                  <SearchMenu />
                  <Text $ls={0.36} $color="#c6c6c6">Search</Text>
                </SearchBox>
              </ToolArt>
              <ToolLabel $ls={0.37}>Search String</ToolLabel>
            </Tool>
          </Tools>
        </Toolbar>

        <Panes>
          <ListPane>
            <ListHeader>
              <HeadCell $pl={15}><Text $size={21.5} $ls={0.2}>Ca...</Text></HeadCell>
              <HeadCell $pl={6}><Text $size={21.5} $ls={0.1}>Name</Text></HeadCell>
              <HeadCell $pl={6}><Text $size={21.5} $ls={0.65}>Created</Text></HeadCell>
              <HeadCell $pl={6}><Text $size={21.5} $ls={0.37}>Modified</Text></HeadCell>
              <HeadCell $pl={6}><Text $size={21.5} $ls={0.06}>Accessed</Text></HeadCell>
            </ListHeader>
            <ListRow>
              <CategoryPill><Text $family="Noto Sans" $size={24} $ls={1.5} $color="#fff">G..</Text></CategoryPill>
              <Cell />
              <Cell><Text $family="Noto Sans" $size={24} $ls={1.19}>Today, 8:58 AM</Text></Cell>
              <Cell><Text $family="Noto Sans" $size={24} $ls={1.19}>Today, 8:58 AM</Text></Cell>
              <Cell $right><Text $family="Noto Sans" $size={24}>1</Text></Cell>
            </ListRow>
          </ListPane>

          <DetailPane>
            <InfoBar>
              <Text $size={21} $weight={700} $ls={1.13}>Created:</Text>
              <Text $size={21} $weight={700} $ls={1.14}>31/03/21 08:58</Text>
              <Text $size={21} $weight={700} $ls={0.83}>Modified:</Text>
              <Text $size={21} $weight={700} $ls={0.99}>3/31/21, 8:58 AM</Text>
              <Text $size={21} $weight={700} $ls={0.73}>Accessed:</Text>
              <Text $size={21} $weight={700}>1</Text>
            </InfoBar>
            <Form>
              <FormRow $h={44}>
                <LabelCell><RowLabel><Text>Category:</Text></RowLabel><UpDown /></LabelCell>
                <GenericPill><Text $weight={500} $color="#fafafa">Generic</Text></GenericPill>
              </FormRow>
              <FormRow $h={8} />
              {[0, 1, 2, 3, 4, 5, 6, 7].map((i) => (
                <FormRow key={i}>
                  <span />
                  <Field />
                  {fieldIcons[i]}
                </FormRow>
              ))}
              <Notes />
            </Form>
          </DetailPane>
        </Panes>

        <BottomBar>
          <Segment $w={48} $pl={14} $top="#dcdcdc"><PlusMinus plus /></Segment>
          <Segment $w={47} $pl={12}><PlusMinus /></Segment>
          <Segment $w={137} $pl={22} $gap={26} $top="#dcdcdc">
            <Lowered><Text $ls={0.21}>Show</Text></Lowered>
            <Chevron />
          </Segment>
          <Segment $w={625} $pl={15} $gap={19} $top="#dcdcdc">
            <Magnifier size={23} color="#858585" sw={4} />
            <Text $size={21.5} $weight={700} $ls={0.96} $color="#adadad">1 of 1</Text>
          </Segment>
          <Segment $w={46} $pl={8} $top="#dcdcdc"><SidebarIcon w={26} h={26} color="#333" /></Segment>
          <Segment $w={251} $pl={8} $gap={35}>
            <PushKey color="#262626" ring="#777" hole="#eee" w={34} h={34} />
            <Lowered><Text $ls={0.63}>Push &amp; Pull</Text></Lowered>
          </Segment>
          <Segment $w={62} />
          <Segment $w={88} $pl={6} $gap={34}><Ellipsis /><Chevron /></Segment>
          <Segment $grow />
          <Segment $w={194} $pl={65}><Text>View</Text></Segment>
          <Segment $w={182} $pl={73} $last $bg="linear-gradient(100deg, #b2b2b2, #cfcfcf 60%, #d2d2d2)"><Text>Edit</Text></Segment>
        </BottomBar>
      </Window>

      <Dock>
        {dockApps.map((Icon, i) => (
          <Slot key={i} $pt={Icon === Mountains ? 8 : 13}>
            <Icon />
            {running.includes(Icon) && <RunDot />}
          </Slot>
        ))}
        <Divider $ml={19.5} $mr={20} />
        <Slot $w={82} $pt={7}><Archive /></Slot>
        <Slot $w={88} $pt={7}><HexCross /></Slot>
        <Slot $w={83} $pt={7}><Repository /><RunDot $mt={1.5} /></Slot>
        <Divider $ml={19} $mr={23} />
        <Slot $w={77} $pt={15}><Downloads /></Slot>
        <Slot $w={93} $pt={8}><Trash /></Slot>
      </Dock>

      <Prefs>
        <PrefsBar>
          <Lights>
            <Light $c="#fc5b57" $b="#e2453f" />
            <Light $c="#fdbc2e" $b="#e0a023" />
            <Light $c="#e4e4e4" $b="#cfcfcf" />
          </Lights>
          <PrefsTitle><Text $size={27} $weight={700} $ls={1.2} $color="#4a4a4a">General</Text></PrefsTitle>
          <Tab $active>
            <TabArt><SwitchPlate /></TabArt>
            <Text $size={21.5} $weight={500} $ls={0.45} $color="#175fc6">General</Text>
          </Tab>
          <Tab>
            <TabArt><LetterT /></TabArt>
            <Text $size={21.5} $ls={0.42} $color="#606060">Font</Text>
          </Tab>
          <More><DoubleChevron /></More>
        </PrefsBar>
        <PrefsBody>
          <StartupRow>
            <StartupLabel><Text $ls={0.46}>Startup Action:</Text></StartupLabel>
            <Popup>
              <PopupValue><Text $ls={0.38}>Standard Behaviour</Text></PopupValue>
              <Stepper><UpDown w={14} h={21} color="#fff" sw={2.400} /></Stepper>
            </Popup>
          </StartupRow>
          <Explain>
            <Text $ls={0.43}>Resume active.</Text>
            <Text $ls={0.29}>If no documents are resumed, a new document is automatically created.</Text>
          </Explain>
        </PrefsBody>
      </Prefs>
    </Desktop>
  );
}
